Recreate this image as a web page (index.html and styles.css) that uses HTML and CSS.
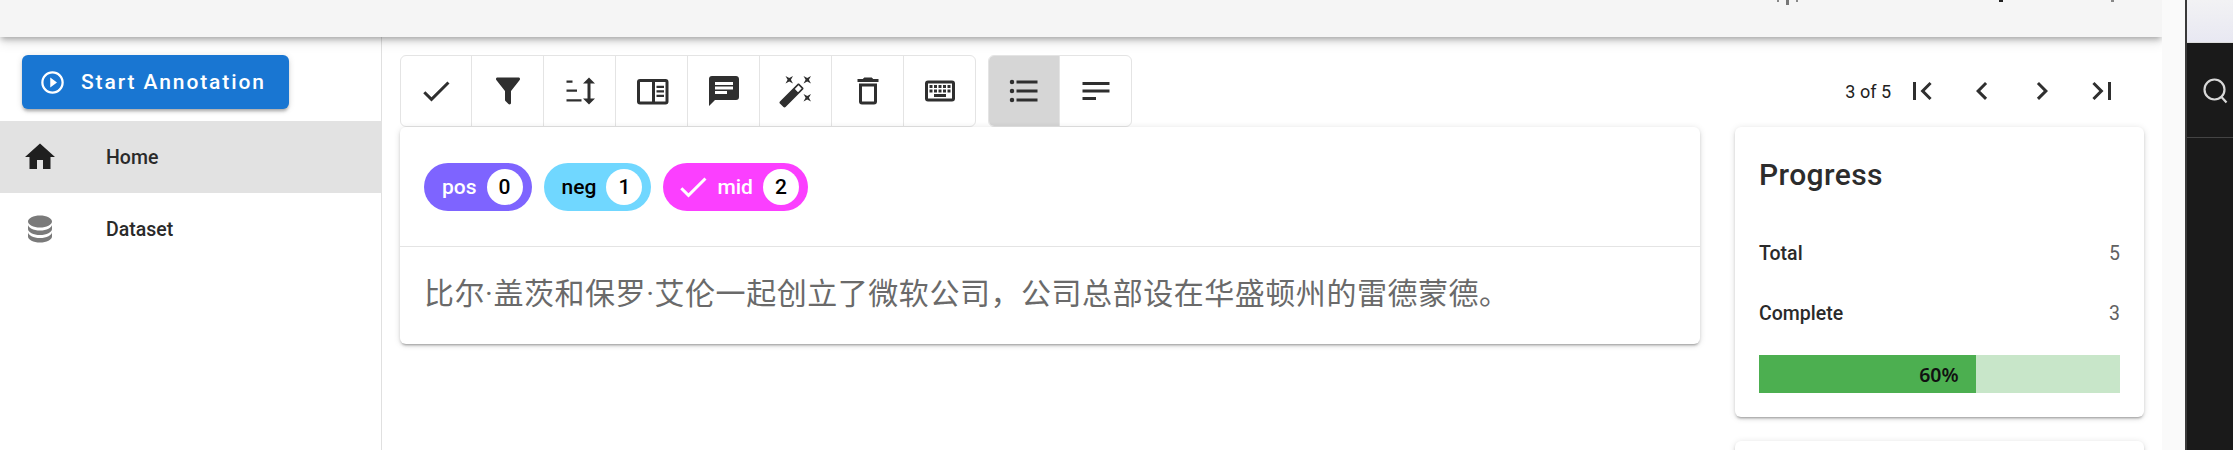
FILE: index.html
```html
<!DOCTYPE html>
<html lang="en">
<head>
  <meta charset="UTF-8" />
  <meta name="viewport" content="width=device-width, initial-scale=1.0" />
  <title>Annotation</title>
  <link rel="stylesheet" href="styles.css">
</head>
<body>
  <div class="page">
    <header class="topbar">
      <svg class="topbar-marks" width="340" height="6" viewBox="0 0 340 6">
        <rect x="2" y="0" width="2" height="2" fill="#888"/>
        <rect x="11" y="0" width="3" height="5" fill="#777"/>
        <rect x="21" y="0" width="2" height="2" fill="#888"/>
        <rect x="224" y="0" width="4" height="2" fill="#222"/>
        <rect x="336" y="0" width="3" height="2" fill="#888"/>
      </svg>
    </header>

    <div class="layout">
      <aside class="sidebar">
        <button class="start-btn">
          <svg class="start-icon" viewBox="0 0 24 24"><path d="M10,16.5L16,12L10,7.5V16.5M12,2A10,10 0 0,0 2,12A10,10 0 0,0 12,22A10,10 0 0,0 22,12A10,10 0 0,0 12,2M12,20C7.59,20 4,16.41 4,12C4,7.59 7.59,4 12,4C16.41,4 20,7.59 20,12C20,16.41 16.41,20 12,20Z"/></svg>
          Start Annotation
        </button>
        <nav class="menu">
          <a class="menu-item active" href="#home">
            <svg class="icon" viewBox="0 0 24 24"><path d="M10,20V14H14V20H19V12H22L12,3L2,12H5V20H10Z"/></svg>
            Home
          </a>
          <a class="menu-item" href="#dataset">
            <svg class="icon muted" viewBox="0 0 24 24"><path d="M12,3C7.58,3 4,4.79 4,7C4,9.21 7.58,11 12,11C16.42,11 20,9.21 20,7C20,4.79 16.42,3 12,3M4,9V12C4,14.21 7.58,16 12,16C16.42,16 20,14.21 20,12V9C20,11.21 16.42,13 12,13C7.58,13 4,11.21 4,9M4,14V17C4,19.21 7.58,21 12,21C16.42,21 20,19.21 20,17V14C20,16.21 16.42,18 12,18C7.58,18 4,16.21 4,14Z"/></svg>
            Dataset
          </a>
        </nav>
      </aside>

      <main class="content">
        <div class="toolbar">
          <div class="tool-group">
            <button class="tool"><svg class="icon" viewBox="0 0 24 24"><path d="M21,7L9,19L3.5,13.5L4.91,12.09L9,16.17L19.59,5.59L21,7Z"/></svg></button>
            <button class="tool"><svg class="icon" viewBox="0 0 24 24"><path d="M14,12V19.88C14.04,20.18 13.94,20.5 13.71,20.71C13.32,21.1 12.69,21.1 12.3,20.71L10.29,18.7C10.06,18.47 9.96,18.16 10,17.87V12H9.97L4.21,4.62C3.87,4.19 3.95,3.56 4.38,3.22C4.57,3.08 4.78,3 5,3V3H19V3C19.22,3 19.43,3.08 19.62,3.22C20.05,3.56 20.13,4.19 19.79,4.62L14.03,12H14Z"/></svg></button>
            <button class="tool"><svg class="icon" viewBox="0 0 24 24"><path d="M18,3L22,7H19V17H22L18,21L14,17H17V7H14L18,3M3,5H7V6.5H3V5M3,11H10V12.5H3V11M3,17.5H13V19H3V17.5Z"/></svg></button>
            <button class="tool"><svg class="icon" viewBox="0 0 24 24"><path d="M4,4H21A2,2 0 0,1 23,6V19A2,2 0 0,1 21,21H4A2,2 0 0,1 2,19V6A2,2 0 0,1 4,4M4,6V19H12V6H4M14,6V19H21V6H14M15,8.5H20V10H15V8.5M15,11.5H20V13H15V11.5M15,14.5H20V16H15V14.5Z"/></svg></button>
            <button class="tool"><svg class="icon" viewBox="0 0 24 24"><path d="M20,2H4A2,2 0 0,0 2,4V22L6,18H20A2,2 0 0,0 22,16V4C22,2.89 21.1,2 20,2M6,9H18V11H6M14,14H6V12H14M18,8H6V6H18"/></svg></button>
            <button class="tool"><svg class="icon" viewBox="0 0 24 24"><path d="M7.5,5.6L5,7L6.4,4.5L5,2L7.5,3.4L10,2L8.6,4.5L10,7L7.5,5.6M19.5,15.4L22,14L20.6,16.5L22,19L19.5,17.6L17,19L18.4,16.5L17,14L19.5,15.4M22,2L20.6,4.5L22,7L19.5,5.6L17,7L18.4,4.5L17,2L19.5,3.4L22,2M13.34,12.78L15.78,10.34L13.66,8.22L11.22,10.66L13.34,12.78M14.37,7.29L16.71,9.63C17.1,10 17.1,10.65 16.71,11.04L5.04,22.71C4.65,23.1 4,23.1 3.63,22.71L1.29,20.37C0.9,20 0.9,19.35 1.29,18.96L12.96,7.29C13.35,6.9 14,6.9 14.37,7.29Z"/></svg></button>
            <button class="tool"><svg class="icon" viewBox="0 0 24 24"><path d="M6,19A2,2 0 0,0 8,21H16A2,2 0 0,0 18,19V7H6V19M8,9H16V19H8V9M15.5,4L14.5,3H9.5L8.5,4H5V6H19V4H15.5Z"/></svg></button>
            <button class="tool"><svg class="icon" viewBox="0 0 24 24"><path d="M4,5A2,2 0 0,0 2,7V17A2,2 0 0,0 4,19H20A2,2 0 0,0 22,17V7A2,2 0 0,0 20,5H4M4,7H20V17H4V7M5,8V10H7V8H5M8,8V10H10V8H8M11,8V10H13V8H11M14,8V10H16V8H14M17,8V10H19V8H17M5,11V13H7V11H5M8,11V13H10V11H8M11,11V13H13V11H11M14,11V13H16V11H14M17,11V13H19V11H17M8,14V16H16V14H8Z"/></svg></button>
          </div>
          <div class="tool-group">
            <button class="tool selected"><svg class="icon" viewBox="0 0 24 24"><path d="M7,5H21V7H7V5M7,13V11H21V13H7M4,4.5A1.5,1.5 0 0,1 5.5,6A1.5,1.5 0 0,1 4,7.5A1.5,1.5 0 0,1 2.5,6A1.5,1.5 0 0,1 4,4.5M4,10.5A1.5,1.5 0 0,1 5.5,12A1.5,1.5 0 0,1 4,13.5A1.5,1.5 0 0,1 2.5,12A1.5,1.5 0 0,1 4,10.5M7,19V17H21V19H7M4,16.5A1.5,1.5 0 0,1 5.5,18A1.5,1.5 0 0,1 4,19.5A1.5,1.5 0 0,1 2.5,18A1.5,1.5 0 0,1 4,16.5Z"/></svg></button>
            <button class="tool"><svg class="icon" viewBox="0 0 24 24"><path d="M21,6V8H3V6H21M3,18H12V16H3V18M3,13H21V11H3V13Z"/></svg></button>
          </div>
          <div class="pager">
            <span class="pager-count">3 of 5</span>
            <button class="pager-btn"><svg class="icon" viewBox="0 0 24 24"><path d="M18.41,16.59L13.82,12L18.41,7.41L17,6L11,12L17,18L18.41,16.59M6,6H8V18H6V6Z"/></svg></button>
            <button class="pager-btn"><svg class="icon" viewBox="0 0 24 24"><path d="M15.41,16.58L10.83,12L15.41,7.41L14,6L8,12L14,18L15.41,16.58Z"/></svg></button>
            <button class="pager-btn"><svg class="icon" viewBox="0 0 24 24"><path d="M8.59,16.58L13.17,12L8.59,7.41L10,6L16,12L10,18L8.59,16.58Z"/></svg></button>
            <button class="pager-btn"><svg class="icon" viewBox="0 0 24 24"><path d="M5.59,7.41L10.18,12L5.59,16.59L7,18L13,12L7,6L5.59,7.41M16,6H18V18H16V6Z"/></svg></button>
          </div>
        </div>

        <div class="columns">
          <section class="card doc-card">
            <div class="chips">
              <span class="chip chip-pos">pos<span class="chip-key">0</span></span>
              <span class="chip chip-neg">neg<span class="chip-key">1</span></span>
              <span class="chip chip-mid">
                <svg class="chip-check" viewBox="0 0 24 24"><path d="M21,7L9,19L3.5,13.5L4.91,12.09L9,16.17L19.59,5.59L21,7Z"/></svg>
                mid<span class="chip-key">2</span>
              </span>
            </div>
            <p class="doc-text">比尔·盖茨和保罗·艾伦一起创立了微软公司，公司总部设在华盛顿州的雷德蒙德。</p>
          </section>

          <div class="side-cards">
            <section class="card progress-card">
              <h2 class="progress-title">Progress</h2>
              <div class="stat"><span class="stat-name">Total</span><span class="stat-value">5</span></div>
              <div class="stat"><span class="stat-name">Complete</span><span class="stat-value">3</span></div>
              <div class="bar">
                <div class="bar-fill" style="width: 60%"><span>60%</span></div>
              </div>
            </section>
            <section class="card next-card"></section>
          </div>
        </div>
      </main>
    </div>
  </div>

  <div class="gutter"></div>

  <aside class="dark-panel">
    <div class="dark-top"></div>
    <div class="dark-search">
      <svg width="26" height="26" viewBox="0 0 26 26" fill="none" stroke="#d8d8d8" stroke-width="2.2"><circle cx="11.5" cy="11.5" r="10"/><path d="M18.5 19l5 5.5"/></svg>
    </div>
  </aside>
</body>
</html>
```

FILE: styles.css
```css
* {
  box-sizing: border-box;
}
html, body {
  height: 100%;
}
body {
  margin: 0;
  display: flex;
  overflow: hidden;
  background: #fafafa;
  font-family: Roboto, Arial, sans-serif;
  color: #212121;
}
button {
  font-family: inherit;
  border: 0;
  padding: 0;
  background: none;
  cursor: pointer;
}
.page {
  width: 2162px;
  flex: none;
  background: #fff;
  overflow: hidden;
}
.icon {
  width: 36px;
  height: 36px;
  flex: none;
  fill: #2f2f2f;
}
.topbar {
  position: relative;
  z-index: 2;
  height: 37px;
  display: flex;
  justify-content: flex-end;
  align-items: flex-start;
  padding-right: 47px;
  background: #f5f5f5;
  box-shadow: 0 3px 6px -1px rgba(0,0,0,.3), 0 6px 12px rgba(0,0,0,.1);
}
.layout {
  display: flex;
  height: 413px;
}

/* sidebar */
.sidebar {
  width: 382px;
  flex: none;
  padding-top: 18px;
  border-right: 1px solid #e0e0e0;
}
.start-btn {
  display: flex;
  align-items: center;
  gap: 15px;
  width: 267px;
  height: 54px;
  margin: 0 0 12px 22px;
  padding-left: 17px;
  border-radius: 6px;
  background: #1976d2;
  color: #fff;
  font-size: 21px;
  font-weight: 500;
  letter-spacing: 1.9px;
  box-shadow: 0 3px 3px -2px rgba(0,0,0,.2), 0 3px 3px rgba(0,0,0,.14), 0 1px 7px rgba(0,0,0,.12);
}
.start-icon {
  width: 27px;
  height: 27px;
  fill: #fff;
}
.menu {
  margin-right: -1px;
}
.menu-item {
  display: flex;
  align-items: center;
  gap: 48px;
  height: 72px;
  padding-left: 22px;
  color: #2a2a2a;
  font-size: 19.5px;
  font-weight: 500;
  text-decoration: none;
}
.menu-item.active {
  background: #e2e2e2;
}
.menu-item .icon {
  fill: #1f1f1f;
}
.menu-item .icon.muted {
  fill: #7a7a7a;
}

/* toolbar */
.content {
  flex: 1;
  min-width: 0;
  padding: 18px 18px 0;
}
.toolbar {
  display: flex;
  height: 72px;
  gap: 12px;
}
.tool-group {
  display: flex;
  border: 1px solid #e4e4e4;
  border-radius: 6px;
  overflow: hidden;
}
.tool {
  width: 72px;
  display: flex;
  align-items: center;
  justify-content: center;
  border-left: 1px solid #e4e4e4;
}
.tool:first-child {
  width: 70px;
  border-left: 0;
}
.tool.selected {
  background: #d6d6d6;
}
.pager {
  margin-left: auto;
  display: flex;
  align-items: center;
  padding-right: 12px;
}
.pager-count {
  margin-right: 1px;
  font-size: 18px;
  color: #212121;
}
.pager-btn {
  width: 60px;
  height: 60px;
  display: flex;
  align-items: center;
  justify-content: center;
}

/* cards */
.columns {
  display: grid;
  grid-template-columns: 1300px 409px;
  gap: 35px;
}
.card {
  background: #fff;
  border-radius: 6px;
  box-shadow: 0 3px 2px -2px rgba(0,0,0,.2), 0 2px 3px rgba(0,0,0,.14), 0 1px 7px rgba(0,0,0,.12);
}
.doc-card {
  height: 217px;
}
.chips {
  display: flex;
  gap: 12px;
  height: 120px;
  padding: 36px 24px 0;
  border-bottom: 1px solid #e4e4e4;
}
.chip {
  display: flex;
  align-items: center;
  height: 48px;
  padding: 0 9px 0 18px;
  border-radius: 24px;
  color: #fff;
  font-size: 21px;
  font-weight: 500;
}
.chip-pos {
  background: #7e64ff;
}
.chip-neg {
  background: #70d7ff;
  color: #000;
}
.chip-mid {
  background: #fb3fff;
  padding-left: 12px;
}
.chip-check {
  width: 36px;
  height: 36px;
  margin-right: 6px;
  fill: #fff;
}
.chip-key {
  width: 36px;
  height: 36px;
  margin-left: 10px;
  display: flex;
  align-items: center;
  justify-content: center;
  border-radius: 50%;
  background: #fff;
  color: #000;
}
.doc-text {
  margin: 0;
  padding: 23px 24px 0;
  font-family: Roboto, "Noto Sans CJK SC", sans-serif;
  font-size: 30px;
  line-height: 48px;
  letter-spacing: .54px;
  color: #6a6a6a;
}

/* progress */
.side-cards {
  display: flex;
  flex-direction: column;
  gap: 24px;
}
.progress-card {
  height: 290px;
  padding: 0 24px;
}
.progress-title {
  margin: 0 0 24px;
  padding-top: 24px;
  font-size: 30px;
  font-weight: 500;
  line-height: 48px;
  letter-spacing: .4px;
  color: #2c2c2c;
}
.stat {
  display: flex;
  justify-content: space-between;
  align-items: center;
  height: 60px;
  font-size: 19.5px;
}
.stat-name {
  font-weight: 500;
  color: #2a2a2a;
}
.stat-value {
  color: #616161;
  font-size: 19.5px;
}
.bar {
  height: 38px;
  margin-top: 12px;
  background: #c8e6c9;
}
.bar-fill {
  height: 100%;
  display: flex;
  align-items: center;
  justify-content: flex-end;
  padding-right: 17px;
  background: #4caf50;
  font-family: "Noto Sans", sans-serif;
  font-size: 19.5px;
  font-weight: 600;
  color: #111;
}
.next-card {
  height: 60px;
}

/* right edge */
.gutter {
  width: 23px;
  flex: none;
  background: #fafafa;
}
.dark-panel {
  flex: 1;
  background: #1a1a1a;
  border-left: 2px solid #3a3a3a;
}
.dark-top {
  height: 43px;
  background: linear-gradient(#f2f2f4, #e8e8f2);
  border-bottom: 1px solid #ddd;
}
.dark-search {
  height: 95px;
  padding: 35px 0 0 16px;
  border-bottom: 1px solid #444;
}
```
